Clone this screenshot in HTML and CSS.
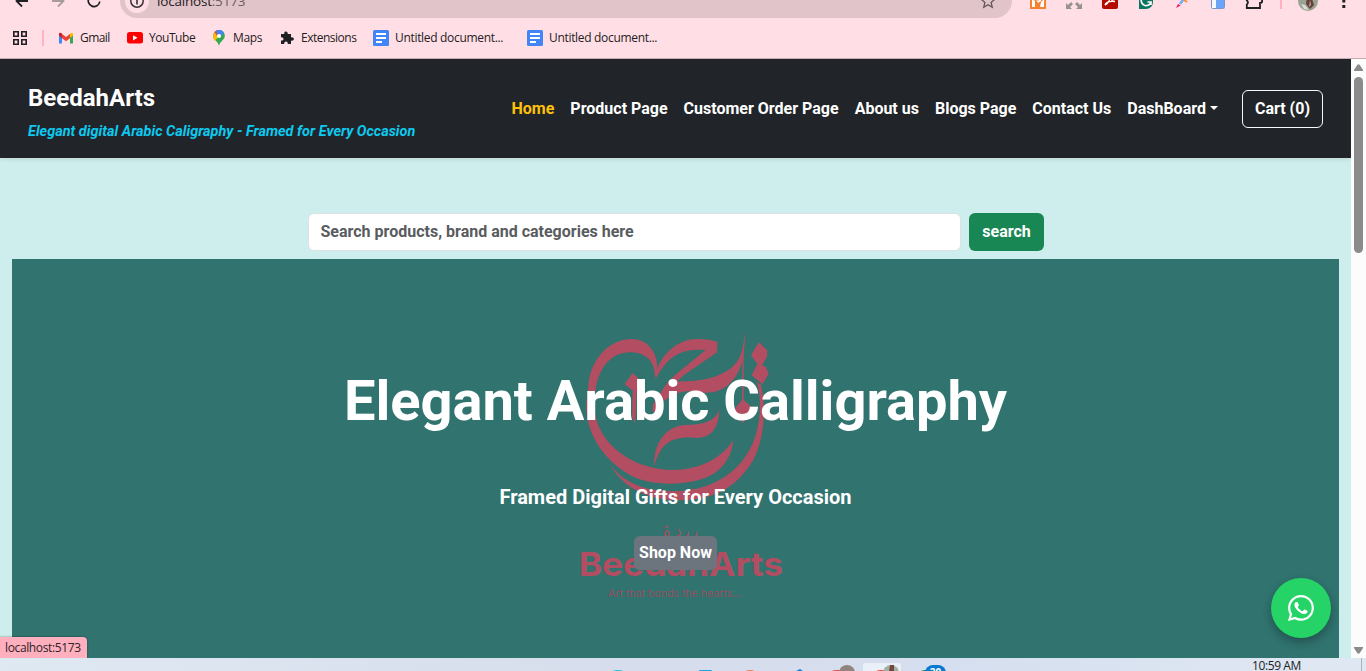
FILE: index.html
```html
<!DOCTYPE html>
<html lang="en">
<head>
<meta charset="utf-8">
<title>BeedahArts</title>
<link rel="stylesheet" href="styles.css">
</head>
<body>
<div class="window">
  <header class="chrome">
    <div class="toolbar">
      <div class="toolbar-row">
        <span class="tool"><svg width="16" height="16" viewBox="0 0 16 16"><path d="M14 8H3M8 2.500L2.500 8L8 13.500" fill="none" stroke="#1f2023" stroke-width="1.800"/></svg></span>
        <span class="tool"><svg width="16" height="16" viewBox="0 0 16 16"><path d="M2 8h11M8 2.500L13.500 8L8 13.500" fill="none" stroke="#a99a9e" stroke-width="1.800"/></svg></span>
        <span class="tool"><svg width="16" height="16" viewBox="0 0 16 16"><path d="M12.500 4A5.800 5.800 0 1 0 13.800 8.500" fill="none" stroke="#1f2023" stroke-width="1.700"/></svg></span>
        <div class="omnibox">
          <span class="site-info"><svg width="16" height="16" viewBox="0 0 16 16"><circle cx="8" cy="8" r="6.200" fill="none" stroke="#333" stroke-width="1.500"/><path d="M8 7v4.500M8 4.500v1.500" stroke="#333" stroke-width="1.600"/></svg></span>
          <span class="url">localhost<span class="port">:5173</span></span>
          <svg class="star" width="16" height="16" viewBox="0 0 16 16"><path d="M8 1.500l1.900 4.400 4.800.4-3.600 3.200 1.100 4.700L8 11.700l-4.200 2.500 1.100-4.700L1.300 6.300l4.800-.4z" fill="none" stroke="#5f5558" stroke-width="1.300"/></svg>
        </div>
        <span class="tool"><svg width="16" height="16" viewBox="0 0 16 16"><path d="M0 0h16v16H0z" fill="#f58231"/><path d="M2 6l3 2v6H2zM14 6l-3 3-1 5h4zM5 5l3 3 3-3v3l-3 2z" fill="#fff"/></svg></span>
        <span class="tool"><svg width="16" height="16" viewBox="0 0 16 16"><path d="M0 10v6h6l-2-2 3-3-2-2-3 3zM16 10v6h-6l2-2-3-3 2-2 3 3zM0 6V0h6L4 2l3 3-2 2-3-3z" fill="#98928f"/></svg></span>
        <span class="tool"><svg width="16" height="16" viewBox="0 0 16 16"><rect width="16" height="16" rx="2" fill="#b30b00"/><path d="M3 12c3-1 5-5 5-9M3 12c1-3 5-4 10-3.500C10 8.500 8 6 8 3" fill="none" stroke="#fff" stroke-width="1.400"/></svg></span>
        <span class="tool"><svg width="16" height="16" viewBox="0 0 16 16"><path d="M1 1h14v8a7 7 0 0 1-7 7H1z" fill="#0b7562"/><path d="M12.500 5A5 5 0 1 0 13 9H9.500M13 9v3" fill="none" stroke="#fff" stroke-width="1.700"/></svg></span>
        <span class="tool"><svg width="16" height="16" viewBox="0 0 16 16"><path d="M6 11l6-8" stroke="#72adf7" stroke-width="2.600"/><path d="M10 7l3 2" stroke="#ff8b38" stroke-width="2"/><path d="M2 15l2-4 2.500 1.500z" fill="#ef1261"/></svg></span>
        <span class="tool"><svg width="14" height="16" viewBox="0 0 14 16"><rect x=".5" y=".5" width="13" height="15" rx="1" fill="#f6f9ff" stroke="#7797c9"/><path d="M5 0h8v15H5z" fill="#6ba5fb"/></svg></span>
        <span class="tool"><svg width="18" height="18" viewBox="0 0 18 18"><path d="M3 3h4c0-3 4-3 4 0h4v4c3 0 3 4 0 4v5H1.800v-3.500c1.500-1 1.500-3 0-4z" fill="none" stroke="#1f2023" stroke-width="1.800"/></svg></span>
        <span class="separator"></span>
        <span class="tool"><svg width="20" height="20" viewBox="0 0 20 20"><circle cx="10" cy="10" r="10" fill="#9aa391"/><path d="M9 6l5 2 2 6-4 4-4-5z" fill="#653f3c"/><path d="M3 13l4 1 4 5-5-1z" fill="#d9ddd3"/><path d="M12 9l1 5-2 2z" fill="#c8a8a0"/></svg></span>
        <span class="tool"><svg width="4" height="16" viewBox="0 0 4 16"><path d="M.3 1h3v3h-3zM.3 6.500h3v3h-3zM.3 12h3v3h-3z" fill="#222"/></svg></span>
      </div>
    </div>
    <nav class="bookmarks">
      <svg class="apps" width="14" height="14" viewBox="0 0 14 14"><path d="M.8.8h4.400v4.400H.8zM8.800.8h4.400v4.400H8.800zM.8 8.800h4.400v4.400H.8zM8.800 8.800h4.400v4.400H8.800z" fill="none" stroke="#1f2023" stroke-width="1.600"/></svg>
      <span class="pipe"></span>
      <a class="bookmark gmail"><svg width="16" height="16" viewBox="0 0 16 16"><path d="M1 4v9.500h3V7z" fill="#4285f4"/><path d="M12 7v6.500h3V4z" fill="#34a853"/><path d="M12 4.500V8l3-2.500V4c0-1.500-1.500-1.800-3-.5z" fill="#fbbc04"/><path d="M4 4l4 3 4-3v4.300l-4 3-4-3z" fill="#ea4335"/><path d="M1 4c0-1.500 1.500-1.800 3-.5V8L1 5.500z" fill="#c5221f"/></svg><span>Gmail</span></a>
      <a class="bookmark youtube"><svg width="16" height="12" viewBox="0 0 16 12"><rect width="16" height="11.500" rx="2.500" fill="#f00"/><path d="M6 3.200v5.200l4.500-2.600z" fill="#fff"/></svg><span>YouTube</span></a>
      <a class="bookmark maps"><svg width="12" height="16" viewBox="0 0 12 16"><path d="M6 0a5.800 5.800 0 0 0-5.800 6c0 4 4.800 5 5.800 9.800C7 11 11.800 10 11.800 6A5.800 5.800 0 0 0 6 0z" fill="#34a853"/><path d="M1.500 2L6 6 1.800 11C.5 9 0 8 .2 5z" fill="#fbbc04"/><path d="M1.500 2L4 6l4-5.600C5 -.5 3 .3 1.500 2z" fill="#ea4335"/><path d="M3 .9L4.500 5 6 8l5-5C9.500 0 6 -1 3 .9z" fill="#4285f4"/><circle cx="6" cy="6" r="2.100" fill="#fff"/></svg><span>Maps</span></a>
      <a class="bookmark ext"><svg width="14" height="14" viewBox="0 0 14 14"><path d="M1 3h3.300C3.500-.5 8.300-.5 7.700 3H11v3.300c3.800-.6 3.800 4 0 3.400V13H7.800c.3-3.400-4-3.400-3.600 0H1V9.600c3.300.3 3.300-3.700 0-3.400z" fill="#1f2023"/></svg><span>Extensions</span></a>
      <a class="bookmark doc"><svg width="16" height="16" viewBox="0 0 16 16"><rect width="16" height="16" rx="1.500" fill="#4285f4"/><path d="M3 4h10M3 8h10M3 12h6" stroke="#fff" stroke-width="2"/></svg><span>Untitled document...</span></a>
      <a class="bookmark doc"><svg width="16" height="16" viewBox="0 0 16 16"><rect width="16" height="16" rx="1.500" fill="#4285f4"/><path d="M3 4h10M3 8h10M3 12h6" stroke="#fff" stroke-width="2"/></svg><span>Untitled document...</span></a>
    </nav>
  </header>

  <div class="viewport">
    <div class="page">
      <nav class="navbar">
        <div class="brand">
          <div class="brand-name">BeedahArts</div>
          <div class="brand-tag">Elegant digital Arabic Caligraphy - Framed for Every Occasion</div>
        </div>
        <div class="links">
          <a class="link active">Home</a>
          <a class="link">Product Page</a>
          <a class="link">Customer Order Page</a>
          <a class="link">About us</a>
          <a class="link">Blogs Page</a>
          <a class="link">Contact Us</a>
          <a class="link dropdown">DashBoard</a>
          <a class="cart">Cart (0)</a>
        </div>
      </nav>
      <main class="content">
        <form class="search">
          <input class="search-input" type="text" placeholder="Search products, brand and categories here">
          <button class="search-button" type="button">search</button>
        </form>
        <section class="hero">
          <svg class="emblem" width="240" height="290" viewBox="0 0 720 870">
            <g fill="#b34d61">
              <path d="M291 172C300 105 270 58 215 57C140 57 85 130 85 205L79 250C75 350 145 430 210 465C270 500 395 500 460 462C495 440 518 400 519 361C485 415 420 450 335 450C215 448 120 370 106 285C94 195 125 98 210 97C258 97 285 125 284 166Z"/>
              <path d="M148 433C190 485 245 512 330 514C480 516 580 430 597 300C603 250 598 205 590 185L603 194C618 260 615 350 580 420C520 520 440 542 340 541C250 535 190 500 148 433Z"/>
              <path d="M286 178C289 118 345 57 410 57C435 56 455 60 473 66L471 97L372 165L335 200L300 222C310 202 325 184 345 165L437 90C355 82 318 118 286 178Z"/>
              <path d="M300 222C318 200 335 187 362 184C450 184 535 158 547 86L557 35L550 115C530 194 480 222 430 218C360 203 315 225 283 279C270 270 280 244 300 222Z"/>
              <path d="M547 90L551 90L551 240L573 260L550 310L524 267L546 239Z"/>
              <path d="M283 440C279 380 310 320 373 315C430 315 465 304 477 270C478 310 462 354 409 354C334 347 300 370 283 440Z"/>
              <path d="M596 67L622 91L621 110L606 136L618 141L626 162L607 193L575 166L592 132L573 106Z"/>
              <path d="M218 159L238 178L230 215L226 310L216 290L218 212L194 192Z"/>
            </g>
            <text class="emblem-arabic" x="309" y="652" textLength="106" lengthAdjust="spacingAndGlyphs">ﺑ ﯾ د ةَ</text>
            <text class="emblem-name" x="56" y="768" textLength="613" lengthAdjust="spacingAndGlyphs">BeedahArts</text>
            <text class="emblem-motto" x="144" y="831" textLength="400" lengthAdjust="spacingAndGlyphs">Art that bonds the hearts...</text>
          </svg>
          <h1 class="hero-title">Elegant Arabic Calligraphy</h1>
          <p class="hero-text">Framed Digital Gifts for Every Occasion</p>
          <a class="shop">Shop Now</a>
        </section>
      </main>
      <a class="whatsapp"><svg width="26" height="26" viewBox="0 0 16 16" fill="#fff"><path d="M13.601 2.326A7.850 7.850 0 0 0 7.994 0C3.627 0 .068 3.558.064 7.926c0 1.399.366 2.760 1.057 3.965L0 16l4.204-1.102a7.900 7.900 0 0 0 3.790.965h.004c4.368 0 7.926-3.558 7.930-7.930A7.900 7.900 0 0 0 13.600 2.326zM7.994 14.521a6.600 6.600 0 0 1-3.356-.920l-.240-.144-2.494.654.666-2.433-.156-.251a6.560 6.560 0 0 1-1.007-3.505c0-3.626 2.957-6.584 6.591-6.584a6.560 6.560 0 0 1 4.660 1.931 6.560 6.560 0 0 1 1.928 4.660c-.004 3.639-2.961 6.592-6.592 6.592m3.615-4.934c-.197-.099-1.170-.578-1.353-.646-.182-.065-.315-.099-.445.099-.133.197-.513.646-.627.775-.114.133-.232.148-.430.050-.197-.100-.836-.308-1.592-.985-.590-.525-.985-1.175-1.103-1.372-.114-.198-.011-.304.088-.403.087-.088.197-.232.296-.346.100-.114.133-.198.198-.330.065-.134.034-.248-.015-.347-.050-.099-.445-1.076-.612-1.470-.160-.389-.323-.335-.445-.340-.114-.007-.247-.007-.380-.007a.730.730 0 0 0-.529.247c-.182.198-.691.677-.691 1.654s.710 1.916.810 2.049c.098.133 1.394 2.132 3.383 2.992.470.205.840.326 1.129.418.475.152.904.129 1.246.080.380-.058 1.171-.480 1.338-.943.164-.464.164-.860.114-.943-.049-.084-.182-.133-.380-.232"/></svg></a>
      <div class="status">localhost:5173</div>
    </div>
    <div class="scrollbar">
      <svg width="9" height="7" viewBox="0 0 9 7"><path d="M3.500.5h2L9 6v1H0V6z" fill="#8b8b8b"/></svg>
      <div class="thumb"></div>
      <svg class="down" width="9" height="7" viewBox="0 0 9 7"><path d="M3.500 6.500h2L9 1V0H0v1z" fill="#8b8b8b"/></svg>
    </div>
  </div>

  <footer class="taskbar">
    <svg class="task-icons" width="400" height="13" viewBox="0 0 400 13">
      <ellipse cx="38" cy="16" rx="8" ry="4" fill="#22c3dc"/>
      <rect x="119" y="12" width="13" height="4" rx="1" fill="#16a5ee"/>
      <ellipse cx="170" cy="16" rx="7" ry="4" fill="#f57c45"/>
      <path d="M216 13l4-2 3 2z" fill="#1682d5"/>
      <ellipse cx="257" cy="16" rx="8" ry="4" fill="#e8443a"/>
      <circle cx="267" cy="15" r="8" fill="#928380"/>
      <rect x="283" y="5" width="38" height="16" rx="3" fill="#eaf0f8"/>
      <ellipse cx="301" cy="16" rx="7" ry="4" fill="#e8443a"/>
      <circle cx="311" cy="15" r="8" fill="#a5afa1"/>
      <path d="M310 7h4v6h-5z" fill="#704842"/>
      <path d="M341 13q5-2 8 0z" fill="#16785a"/>
      <rect x="345" y="7" width="21" height="16" rx="8" fill="#0879d1"/>
      <text class="badge-text" x="355.500" y="18" text-anchor="middle">20</text>
    </svg>
    <span class="clock">10:59 AM</span>
    <span class="desktop-edge"></span>
  </footer>
</div>
</body>
</html>
```
FILE: styles.css
```css
* { box-sizing: border-box; }
body { margin: 0; font-family: Roboto, "Liberation Sans", sans-serif; }
svg { display: block; flex: none; }
.window { display: flex; flex-direction: column; width: 1366px; height: 671px; overflow: hidden; }

/* Browser chrome */
.chrome { flex: none; height: 59px; background: #ffdfe5; border-bottom: 1px solid #c8a9b2; font-family: "Open Sans", "Noto Sans", sans-serif; color: #1f2023; }
.toolbar { height: 18px; overflow: hidden; }
.toolbar-row { display: flex; align-items: center; height: 34px; margin-top: -16px; padding-left: 4px; }
.tool { display: flex; flex: none; width: 36px; align-items: center; justify-content: center; }
.omnibox { display: flex; flex: none; align-items: center; width: 892px; height: 34px; margin: 0 8px; padding: 0 16px 0 5px; border-radius: 17px; background: #e1c4c9; }
.site-info { display: flex; flex: none; align-items: center; justify-content: center; width: 24px; height: 24px; border-radius: 50%; background: #ffdfe5; }
.url { margin-left: 8px; font-size: 13.5px; line-height: 20px; letter-spacing: -0.2px; }
.port { color: #6b5c60; }
.star { margin-left: auto; }
.separator { flex: none; width: 2px; height: 16px; margin: 0 8px; background: #ffafbe; }
.bookmarks { display: flex; align-items: center; height: 40px; padding-left: 13px; font-size: 12px; letter-spacing: -0.32px; }
.pipe { width: 2px; height: 16px; margin: 0 14px 0 15px; background: #ffb2c0; }
.bookmark { display: flex; align-items: center; flex: none; height: 20px; white-space: nowrap; }
.bookmark span { padding-bottom: 1px; }
.bookmark svg { margin-right: 6px; }
.gmail { width: 69px; letter-spacing: -0.55px; }
.youtube { width: 86px; letter-spacing: -0.45px; }
.maps { width: 67px; }
.maps svg { margin-right: 8px; }
.ext { width: 93px; letter-spacing: -0.5px; }
.ext svg { margin-right: 7px; }
.doc { width: 154px; }

/* Page area */
.viewport { display: flex; flex: none; height: 599px; }
.page { position: relative; width: 1351px; background: #cdeeec; overflow: hidden; }
.navbar { position: relative; display: flex; align-items: center; justify-content: space-between; height: 99px; padding: 0 28px; background: #212529; box-shadow: 0 2px 4px rgba(0, 0, 0, .075); color: #fff; font-weight: 700; }
.brand-name { font-size: 24px; line-height: 36px; padding-top: 4px; }
.brand-tag { margin-top: 4px; padding-top: 1px; font-size: 14.4px; line-height: 21px; font-style: italic; letter-spacing: 0.03px; color: #0dcaf0; white-space: nowrap; }
.links { display: flex; align-items: center; font-size: 16px; line-height: 24px; white-space: nowrap; }
.link { padding: 0 8px; }
.active { color: #ffc107; }
.dropdown::after { content: ""; display: inline-block; margin-left: 4px; vertical-align: 4px; border: 4.8px solid transparent; border-top-color: #fff; border-bottom: 0; }
.cart { margin-left: 16px; padding: 6px 12px; border: 1px solid #f8f9fa; border-radius: 6px; }
.content { padding: 55px 12px 0; }
.search { display: flex; gap: 8px; margin: 0 0 8px 296px; }
.search-input { width: 653px; height: 38px; padding: 5px 12px 7px 11.5px; border: 1px solid #dee2e6; border-radius: 6px; background: #fff; font: 700 16px/24px Roboto, sans-serif; }
.search-input::placeholder { color: #595c5f; opacity: 1; }
.search-button { width: 75px; height: 38px; padding: 0; border: 0; border-radius: 6px; background: #198754; color: #fff; font: 700 16px/24px Roboto, sans-serif; }
.hero { position: relative; display: flex; flex-direction: column; align-items: center; height: 420px; padding-top: 109px; background: #30736f; color: #fff; font-weight: 700; }
.emblem { position: absolute; left: 548px; top: 61px; }
.emblem-name { font: 700 98px Inter, sans-serif; fill: #b34d61; }
.emblem-motto { font: 400 32px Inter, sans-serif; fill: #964f60; }
.emblem-arabic { font: 400 54px "DejaVu Sans", sans-serif; fill: #a84d60; }
.hero-title { position: relative; margin: 0; font-size: 56px; line-height: 67px; white-space: nowrap; }
.hero-text { position: relative; margin: 47px 0 0; font-size: 20px; line-height: 30px; }
.shop { position: relative; margin-top: 24px; padding: 5px; border-radius: 6px; background: #6c757d; font-size: 16px; line-height: 24px; }
.whatsapp { position: absolute; right: 20px; bottom: 20px; display: flex; align-items: center; justify-content: center; width: 60px; height: 60px; border-radius: 50%; background: #25d366; box-shadow: 0 4px 10px rgba(0, 0, 0, .3); }
.status { position: absolute; left: 0; bottom: 0; width: 87px; height: 21px; padding-left: 5px; border-radius: 0 4px 0 0; background: #ffafbe; box-shadow: 0 0 2px rgba(0, 0, 0, .5); color: #2c2326; font: 12px/21px "Open Sans", sans-serif; letter-spacing: -0.37px; }
.scrollbar { display: flex; flex-direction: column; align-items: center; width: 15px; padding: 5px 0 4px; background: #fcfcfc; }
.thumb { width: 9px; height: 176px; margin-top: 6px; border-radius: 5px; background: #8b8b8b; }
.down { margin-top: auto; }

/* Taskbar */
.taskbar { display: flex; flex: none; height: 13px; padding-left: 580px; overflow: hidden; background: linear-gradient(90deg, #dfe9f2 0%, #d6ddec 45%, #d6dfef 70%, #dfe8f2 100%); }
.badge-text { font: 700 10px "Open Sans", sans-serif; fill: #fff; }
.clock { margin-left: 272px; width: 109px; color: #202124; font: 12px/16px "Open Sans", sans-serif; letter-spacing: -0.4px; white-space: nowrap; }
.desktop-edge { width: 1px; background: #aab3bd; }
```
